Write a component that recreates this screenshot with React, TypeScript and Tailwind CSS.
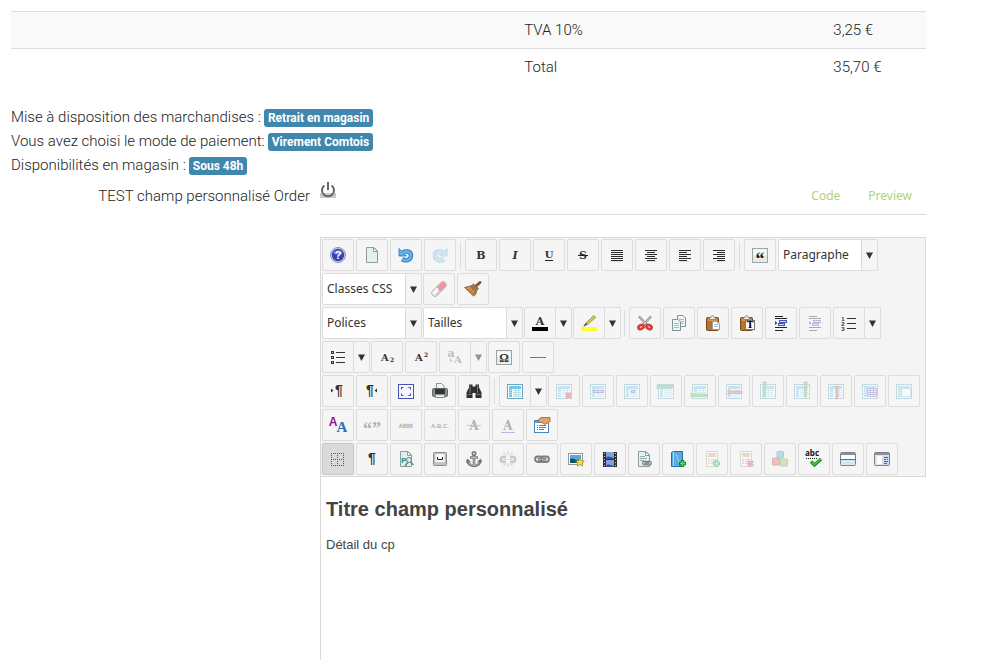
import React, { useState } from 'react';

type IconProps = { children: React.ReactNode; faded?: boolean };

const Icon: React.FC<IconProps> = ({ children, faded }) => (
  <svg width="16" height="16" viewBox="0 0 16 16" fill="none" aria-hidden="true" className={faded ? 'overflow-visible opacity-35' : 'overflow-visible'}>
    {children}
  </svg>
);

const SERIF = '"DejaVu Serif", "Liberation Serif", serif';
const SANS = '"Liberation Sans", sans-serif';

// Letter based icons (bold, italic, superscript...)
type GlyphProps = { text: string; x?: number; y?: number; size?: number; color?: string; italic?: boolean; weight?: number; font?: string };

const Glyph: React.FC<GlyphProps> = ({ text, x = 8, y = 13, size = 11, color = '#333', italic, weight = 700, font = SERIF }) => (
  <text x={x} y={y} fontSize={size} fill={color} textAnchor="middle" fontWeight={weight} fontStyle={italic ? 'italic' : 'normal'} fontFamily={font}>
    {text}
  </text>
);

const Lines: React.FC<{ rows: number[][] }> = ({ rows }) => (
  <>
    {rows.map(([x, w], i) => <rect key={i} x={x} y={3 + i * 2} width={w} height="1" fill="#2b2b2b" />)}
    <rect x="3" y="14" width="10" height="1" fill="#ddd" />
  </>
);

// Base table used by every table action
const Grid: React.FC<{ inner?: string }> = ({ inner = '#b5d9e6' }) => (
  <>
    <rect x="0.5" y="1.5" width="15" height="14" fill="#fff" stroke="#6fa3b8" />
    <rect x="2" y="3" width="12" height="3" fill="#6cc8ea" />
    <rect x="2" y="6" width="3" height="8" fill="#6cc8ea" />
    <path d="M6 7.500h8M6 9.500h8M6 11.500h8M6 13.500h8M8.500 6v8M11.500 6v8" stroke={inner} />
    <path d="M2 7.500h3M2 9.500h3M2 11.500h3" stroke="#a8dcf0" />
  </>
);

const Cross: React.FC = () => <path d="M10 10l5 5M15 10l-5 5" stroke="#d43a3a" strokeWidth="2.800" />;
const Plus: React.FC = () => (
  <>
    <path d="M9 12.500h7M12.500 9v7" stroke="#12852c" strokeWidth="3.400" />
    <path d="M10 12.500h5M12.500 10v5" stroke="#4be06a" strokeWidth="1.600" />
  </>
);

const Page: React.FC = () => (
  <>
    <path d="M2.500 .5h7.500l3.500 3.500v11.500h-11z" fill="#e3f0ef" stroke="#8b9c9c" />
    <path d="M9.500 .5v4h4z" fill="#fff" stroke="#8b9c9c" />
  </>
);

const Chain: React.FC = () => (
  <>
    <rect x="1" y="5.500" width="8" height="5.500" rx="2.700" stroke="#7d7d7d" strokeWidth="1.800" fill="#ddd" />
    <rect x="7" y="5.500" width="8" height="5.500" rx="2.700" stroke="#7d7d7d" strokeWidth="1.800" fill="#ddd" />
    <path d="M4 8.300h8" stroke="#555" strokeWidth="2.200" />
    <path d="M4.500 8.200h7" stroke="#ddd" strokeWidth=".9" />
  </>
);

const Clipboard: React.FC = () => (
  <>
    <rect x="1.500" y="2.500" width="12" height="13" rx="1" fill="#b5732f" stroke="#7c481b" />
    <path d="M3 4h9v2h-9z" fill="#d39a5b" />
    <path d="M4.500 4.500v-2h1.500c0-2.500 3-2.500 3 0h1.500v2z" fill="#eee" stroke="#888" />
  </>
);

const Indent: React.FC = () => (
  <>
    <path d="M2 1.500h8M2 3.500h12M2 12.500h12M2 15.500h8" stroke="#222" />
    <rect x="6.500" y="5.500" width="7" height="2" fill="#cdd6fa" stroke="#4555b8" />
    <rect x="5.500" y="8.500" width="6" height="2" fill="#cdd6fa" stroke="#4555b8" />
    <path d="M2 6v4l2.500-2z" fill="#2b3ea8" />
  </>
);

const Article: React.FC = () => (
  <>
    <path d="M2.500 .5h11v15h-11z" fill="#fff" stroke="#aaa08e" />
    <rect x="4" y="2" width="8" height="4" fill="#d9a066" />
    <path d="M4 8.500h2M7 8.500h5M4 10.500h2M7 10.500h5M4 12.500h2M7 12.500h4" stroke="#999" />
  </>
);

const UndoArrow: React.FC<{ dark: string; light: string }> = ({ dark, light }) => (
  <>
    <path d="M4 6.500c2.500-3.500 9-2.500 9 2c0 4.500-5 6-9 3.800" stroke={dark} strokeWidth="4.400" />
    <path d="M1 1.500v7.500h7.500z" fill={light} stroke={dark} strokeWidth=".8" />
    <path d="M4 6.500c2.500-3.500 9-2.500 9 2c0 4.500-5 6-9 3.800" stroke={light} strokeWidth="2.900" />
  </>
);

const icons: Record<string, React.ReactNode> = {
  help: (
    <Icon>
      <circle cx="8" cy="8" r="7.500" fill="#d4d7ea" stroke="#8b90ba" />
      <circle cx="8" cy="8" r="6.200" fill="#3540b4" />
      <path d="M3 6.500c1-4.500 9-4.500 10 0c-3 1.500-7 1.500-10 0z" fill="#6f7ce0" />
      <Glyph text="?" y={12} size={11} color="#fff" font={SANS} />
    </Icon>
  ),
  newDoc: <Icon><Page /></Icon>,
  undo: <Icon><UndoArrow dark="#2874b8" light="#62b0ea" /></Icon>,
  redo: <Icon faded><g transform="matrix(-1 0 0 1 16 0)"><UndoArrow dark="#4d9bd0" light="#8ccaee" /></g></Icon>,
  bold: <Icon><Glyph text="B" y={12} /></Icon>,
  italic: <Icon><Glyph text="I" y={12} italic /></Icon>,
  underline: <Icon><Glyph text="U" y={11} size={10} /><path d="M4 13.500h8" stroke="#222" /></Icon>,
  strike: <Icon><Glyph text="S" y={12} /><path d="M3 8.500h10" stroke="#222" /></Icon>,
  justify: <Icon><Lines rows={[[2, 12], [2, 12], [2, 12], [2, 12], [2, 12], [2, 12]]} /></Icon>,
  center: <Icon><Lines rows={[[2, 12], [4, 8], [2, 12], [4, 8], [2, 12], [4, 8]]} /></Icon>,
  left: <Icon><Lines rows={[[2, 12], [2, 8], [2, 12], [2, 8], [2, 12], [2, 8]]} /></Icon>,
  right: <Icon><Lines rows={[[2, 12], [6, 8], [2, 12], [6, 8], [2, 12], [6, 8]]} /></Icon>,
  quote: (
    <Icon>
      <rect x=".5" y="1.500" width="15" height="14" fill="#e6eaea" stroke="#a0a6a6" />
      <rect x="1.500" y="2.500" width="13" height="6" fill="#f8fafa" />
      <Glyph text="“" y={18} size={18} font='"Liberation Serif", serif' color="#222" />
    </Icon>
  ),
  eraser: (
    <Icon>
      <path d="M4 12l8-8" stroke="#a39e9e" strokeWidth="7" strokeLinecap="round" />
      <path d="M4 12l8-8" stroke="#f0efee" strokeWidth="5.600" strokeLinecap="round" />
      <path d="M9 7l3-3" stroke="#ee94a0" strokeWidth="5.600" strokeLinecap="round" />
      <path d="M3 11.500l3.500-3.500" stroke="#fff" strokeWidth="2" strokeLinecap="round" />
      <path d="M5 14l4-4" stroke="#cfcaca" strokeWidth="1.400" />
    </Icon>
  ),
  brush: (
    <Icon>
      <path d="M15 1.500l-4.500 4" stroke="#8d5527" strokeWidth="3" strokeLinecap="round" />
      <path d="M8.500 3l5 4.500-3 3.500-6-5z" fill="#8a7a66" stroke="#5f5446" strokeWidth=".7" />
      <path d="M-.5 6.500l6-1.500 6 5.500c0 2-1 3.500-3 4.500z" fill="#ba7c38" stroke="#8b571f" strokeWidth=".7" />
      <path d="M2 7.500l4-1M4 9.500l3-1.500M6.500 12l2.500-2.500" stroke="#e8b978" strokeWidth=".8" />
    </Icon>
  ),
  color: <Icon><Glyph text="A" y={10} size={11} /><rect x="0" y="12" width="16" height="4" fill="#000" /></Icon>,
  highlight: (
    <Icon>
      <path d="M13 .5l-8 7.500-2 3 3.500-1.500 8-7z" fill="#d8d24a" stroke="#77732d" strokeWidth=".7" />
      <path d="M5 8l-3 3.500 4.500-2z" fill="#555" />
      <rect x="0" y="12" width="16" height="4" fill="#fdfd38" />
    </Icon>
  ),
  cut: (
    <Icon>
      <path d="M2 1.500l9 9.500M14 1.500l-9 9.500" stroke="#858585" strokeWidth="2.300" />
      <path d="M2.500 2l8 8.500M13.500 2l-8 8.500" stroke="#e5e5e5" strokeWidth=".9" />
      <ellipse cx="4" cy="12" rx="2.800" ry="1.800" transform="rotate(-30 4 12)" stroke="#d63c3c" strokeWidth="2.600" />
      <ellipse cx="12" cy="12" rx="2.800" ry="1.800" transform="rotate(30 12 12)" stroke="#d63c3c" strokeWidth="2.600" />
    </Icon>
  ),
  copy: (
    <Icon>
      <path d="M6.500 .5h5.500l2.500 2.500v8.500h-8z" fill="#edf6f6" stroke="#7d9599" />
      <path d="M8 4.500h5M8 6.500h5M8 8.500h5" stroke="#a6bec1" />
      <path d="M1.500 4.500h5.500l2.500 2.500v8.500h-8z" fill="#edf6f6" stroke="#7d9599" />
      <path d="M3 8.500h5M3 10.500h5M3 12.500h5" stroke="#a6bec1" />
    </Icon>
  ),
  paste: (
    <Icon>
      <Clipboard />
      <path d="M7.500 6.500h4.500l2.500 2.500v5.500h-7z" fill="#fff" stroke="#8da0a3" />
      <path d="M9 9.500h4M9 11.500h4" stroke="#a6bec1" />
    </Icon>
  ),
  pasteText: (
    <Icon>
      <Clipboard />
      <rect x="6.500" y="5.500" width="9" height="9" fill="#fff" stroke="#777" />
      <Glyph text="T" x={11} y={13} size={9} color="#000" />
    </Icon>
  ),
  indent: <Icon><Indent /></Icon>,
  outdent: <Icon faded><Indent /></Icon>,
  ordered: (
    <Icon>
      <path d="M6 3.500h9M6 8.500h9M6 13.500h9" stroke="#333" />
      <Glyph text="1" x={2} y={6} size={6} font={SANS} />
      <Glyph text="2" x={2} y={11} size={6} font={SANS} />
      <Glyph text="3" x={2} y={16} size={6} font={SANS} />
    </Icon>
  ),
  bullets: (
    <Icon>
      <path d="M6 3.500h9M6 8.500h9M6 13.500h9" stroke="#333" />
      <path d="M1 2h3v3H1zM1 7h3v3H1zM1 12h3v3H1z" fill="#333" />
      <path d="M2 3h1v1H2zM2 8h1v1H2zM2 13h1v1H2z" fill="#ccc" />
    </Icon>
  ),
  sub: <Icon><Glyph text="A" x={6} y={12} size={10} /><Glyph text="2" x={13} y={13} size={6} /></Icon>,
  sup: <Icon><Glyph text="A" x={6} y={12} size={10} /><Glyph text="2" x={13} y={8} size={6} /></Icon>,
  changeCase: (
    <Icon faded>
      <Glyph text="a" x={4} y={8} size={11} color="#555" />
      <Glyph text="A" x={11} y={14} size={10} color="#555" />
      <path d="M3.500 9v3h2" stroke="#555bb0" />
    </Icon>
  ),
  omega: (
    <Icon>
      <rect x=".5" y="1.500" width="15" height="14" fill="#e9ecec" stroke="#9da3a3" />
      <rect x="1.500" y="2.500" width="13" height="6" fill="#fafbfb" />
      <Glyph text="Ω" y={13} size={12} font='"Liberation Serif", serif' />
    </Icon>
  ),
  rule: <Icon><path d="M0 8.500h16" stroke="#777" /></Icon>,
  ltr: <Icon><Glyph text="¶" x={9} y={12} size={14} font={SANS} /><path d="M1 5.500v4l2.500-2z" fill="#333" /></Icon>,
  rtl: <Icon><Glyph text="¶" x={6} y={12} size={14} font={SANS} /><path d="M13 5.500v4l-2.500-2z" fill="#333" /></Icon>,
  fullscreen: (
    <Icon>
      <rect x=".5" y="1.500" width="15" height="14" fill="#f5f8ff" stroke="#4652b4" />
      <path d="M3.500 6.500v-2h2M10.500 4.500h2v2M12.500 10.500v2h-2M5.500 12.500h-2v-2" stroke="#3545b5" />
    </Icon>
  ),
  print: (
    <Icon>
      <path d="M4.500 6v-5.500h5l2.500 2.500v3" fill="#eef6f6" stroke="#86979b" />
      <rect x=".5" y="5.500" width="15" height="8" rx="1.500" fill="#8d8d8d" stroke="#666" />
      <rect x="3" y="6" width="10" height="5" fill="#333" />
      <path d="M3.500 11.500h9v3h-9z" fill="#dcecdf" stroke="#888" />
    </Icon>
  ),
  find: (
    <Icon>
      <path d="M3 1.500h3.500v2h3v-2h3.500v3l2.500 5v5.500h-6v-5h-3v5h-6v-5.500l2.500-5z" fill="#303030" />
      <path d="M4 2v8M11.500 2v8M1.500 11.500h4M10.500 11.500h4" stroke="#777" />
    </Icon>
  ),
  table: <Icon><Grid /></Icon>,
  tableDelete: <Icon faded><Grid /><Cross /></Icon>,
  rowProps: <Icon faded><Grid /><rect x="3.500" y="7.500" width="10" height="2" fill="#c0c0fa" stroke="#5555c0" /></Icon>,
  cellProps: <Icon faded><Grid /><rect x="7.500" y="7.500" width="3" height="2" fill="#c0c0fa" stroke="#5555c0" /></Icon>,
  rowBefore: <Icon faded><Grid /><path d="M-1 1.500l2 1h14v2.500h-14l-2 1z" fill="#67c867" stroke="#3c9c48" strokeWidth=".7" /></Icon>,
  rowAfter: <Icon faded><Grid /><path d="M-1 10l2 1h14v2.500h-14l-2 1z" fill="#67c867" stroke="#3c9c48" strokeWidth=".7" /></Icon>,
  rowDelete: <Icon faded><Grid /><path d="M2 7l2 1h12v2.500h-12l-2 1z" fill="#db6b6b" stroke="#b24545" strokeWidth=".7" /></Icon>,
  colBefore: <Icon faded><Grid /><path d="M2.500 -1h4l-1 2v13h-2v-13z" fill="#67c867" stroke="#3c9c48" strokeWidth=".7" /></Icon>,
  colAfter: <Icon faded><Grid /><path d="M9.500 -1h4l-1 2v13h-2v-13z" fill="#67c867" stroke="#3c9c48" strokeWidth=".7" /></Icon>,
  colDelete: <Icon faded><Grid /><path d="M7 3h4l-1 2v11h-2v-11z" fill="#db6b6b" stroke="#b24545" strokeWidth=".7" /></Icon>,
  split: <Icon faded><Grid inner="#6666c4" /><path d="M5.500 5.500h9v8h-9z" stroke="#6666c4" /></Icon>,
  merge: <Icon faded><Grid /><rect x="5.500" y="5.500" width="9" height="8" fill="#fff" stroke="#8ac7df" /></Icon>,
  style: <Icon><Glyph text="A" x={3} y={9} size={12} color="#8b1890" font={SANS} /><Glyph text="A" x={12} y={15} size={15} color="#3170b6" font='"Liberation Serif", serif' /></Icon>,
  cite: <Icon faded><Glyph text="“”" y={18} size={18} font='"Liberation Serif", serif' /></Icon>,
  abbr: <Icon faded><Glyph text="ABBR" y={11} size={6} font='"DejaVu Sans Mono", monospace' /></Icon>,
  acronym: <Icon faded><Glyph text="A.B.C." y={11} size={6} font={SANS} /></Icon>,
  del: <Icon faded><Glyph text="A" y={13} size={12} /><path d="M1 8.500h14" stroke="#ff3b20" /></Icon>,
  ins: <Icon faded><Glyph text="A" y={13} size={12} /><path d="M1 15.500h14" stroke="#4a4acb" /></Icon>,
  attribs: (
    <Icon>
      <rect x=".5" y="3.500" width="14" height="12" fill="#fff" stroke="#4b87bd" />
      <path d="M1 4h13v2H1z" fill="#5aa0da" />
      <path d="M3 8.500h1M5 8.500h7M3 10.500h1M5 10.500h7M3 12.500h1M5 12.500h5" stroke="#777" />
      <path d="M4 3l3-2.500h9v4l-5 3-3-2h-3z" fill="#dca465" stroke="#98662c" strokeWidth=".8" />
    </Icon>
  ),
  visualAid: (
    <Icon>
      <path d="M1.500 2v13M7.500 2v13M13.500 2v13M1 2.500h13M1 8.500h13M1 14.500h13" stroke="#555" strokeDasharray="1 1" />
    </Icon>
  ),
  chars: <Icon><Glyph text="¶" x={8} y={12} size={14} font={SANS} /></Icon>,
  pageLink: (
    <Icon>
      <Page />
      <Glyph text="P" x={6} y={12} size={8} color="#248c86" font={SANS} />
      <circle cx="11" cy="9" r="2.500" fill="#dcebf4" stroke="#71838c" />
      <path d="M10 11l-3 4M12.500 11l3 3" stroke="#71838c" strokeWidth="1.500" />
    </Icon>
  ),
  nbsp: (
    <Icon>
      <rect x="1.500" y="1.500" width="13" height="13" rx="1" fill="#c4c4c4" stroke="#8a8a8a" />
      <rect x="3.500" y="3" width="9" height="8" fill="#f7f7f7" />
      <path d="M5.500 6v2.500h5v-2.500" stroke="#222" />
    </Icon>
  ),
  anchor: (
    <Icon>
      <circle cx="8" cy="2.500" r="1.700" stroke="#777" strokeWidth="1.600" />
      <path d="M8 4v11M4 6.500h8M1.500 9.500c.5 3 3 5 6.500 5.500c3.500-.5 6-2.500 6.500-5.500" stroke="#777" strokeWidth="2.600" />
      <path d="M0 11.500l1-4 4 3zM16 11.500l-1-4-4 3z" fill="#777" />
      <path d="M8 5v9M5 6.500h6M3 12c1.500 1.500 3 2 5 2.500c2-.5 3.500-1 5-2.500" stroke="#ccc" strokeWidth=".8" />
    </Icon>
  ),
  unlink: (
    <Icon faded>
      <path d="M6 6h-3c-3 0-3 5 0 5h3M10 6h3c3 0 3 5 0 5h-3" stroke="#777" strokeWidth="2.400" />
      <path d="M3 8.500h4M9 8.500h4M8 0v4M8 12.500v3.500M3 1l3 3.500M13 1l-3 3.500M3 15.500l3-3M13 15.500l-3-3" stroke="#888" />
    </Icon>
  ),
  link: <Icon><Chain /></Icon>,
  image: (
    <Icon>
      <rect x=".5" y="2.500" width="14" height="11" fill="#fff" stroke="#8a9ba3" />
      <rect x="2" y="4" width="11" height="8" fill="#5ba6dc" />
      <path d="M2 8c4-2 6 3 11 0v4h-11z" fill="#164e68" />
      <path d="M12 7l1.300 2.700 3 .4-2.200 2 .6 3-2.700-1.500-2.700 1.500.6-3-2.200-2 3-.4z" fill="#f5e04b" stroke="#a38b12" strokeWidth=".7" />
    </Icon>
  ),
  media: (
    <Icon>
      <rect x="1" y="1" width="14" height="15" fill="#303030" />
      <path d="M4 1h8v7h-8z" fill="#7fa1e0" />
      <path d="M4 9h8v7h-8z" fill="#7fa1e0" />
      <path d="M4 7c2-3 4-1 8 0v1h-8zM4 15c2-3 4-1 8 0v1h-8z" fill="#3b5090" />
      <path d="M2.500 2v14M13.500 2v14" stroke="#ccc" strokeDasharray="1 2" />
    </Icon>
  ),
  docLink: (
    <Icon>
      <Page />
      <path d="M4 5.500h5M4 7.500h7M4 9.500h4" stroke="#97aeb0" />
      <g transform="translate(6 7) scale(.62)"><Chain /></g>
    </Icon>
  ),
  bookAdd: (
    <Icon>
      <path d="M1.500 1.500l2-1h9v15h-11z" fill="#5aabe4" stroke="#286da5" />
      <path d="M3.500 1v14M6 3l4 10" stroke="#a9daf6" />
      <Plus />
    </Icon>
  ),
  articleAdd: <Icon faded><Article /><Plus /></Icon>,
  articleDelete: <Icon faded><Article /><Cross /></Icon>,
  blocks: (
    <Icon faded>
      <rect x="5" y=".5" width="6.500" height="6.500" rx="1" fill="#4ba4d5" stroke="#297aa8" />
      <rect x=".5" y="7" width="7" height="7" rx="1" fill="#e25d63" stroke="#b73740" />
      <rect x="8" y="8" width="7.500" height="7" rx="1" fill="#85c950" stroke="#568f2e" />
    </Icon>
  ),
  spell: (
    <Icon>
      <Glyph text="abc" x={6} y={5} size={8} color="#111" font='"Open Sans", sans-serif' />
      <path d="M0 7.500h12" stroke="#222" strokeDasharray="1 1" />
      <path d="M5 10.500l3.500 3.500 6.500-6" stroke="#1c8e2b" strokeWidth="3.400" />
      <path d="M5.500 11l3 2.500 6-5.500" stroke="#45c850" strokeWidth="1.500" />
    </Icon>
  ),
  pageBreak: (
    <Icon>
      <rect x=".5" y="1.500" width="15" height="13" rx="1" fill="#fff" stroke="#7b8388" />
      <path d="M1 2h14v2H1z" fill="#8b9196" />
      <path d="M1 9h14v5H1z" fill="#d3eaf5" />
      <path d="M0 8.500h16" stroke="#5a6d78" />
    </Icon>
  ),
  readMore: (
    <Icon>
      <rect x=".5" y="1.500" width="15" height="13" rx="1" fill="#e0e4e6" stroke="#7b8388" />
      <path d="M1 2h14v2H1z" fill="#8b9196" />
      <path d="M3 5h5v8H3z" fill="#fff" />
      <path d="M9 5h6v9H9z" fill="#cbd9f3" />
      <path d="M10 6.500h4M10 8.500h2M13 8.500h1M10 10.500h4M10 12.500h3" stroke="#4267b8" />
    </Icon>
  ),
};

const Caret: React.FC<{ faded?: boolean }> = ({ faded }) => (
  <svg width="7" height="7" viewBox="0 0 7 7" aria-hidden="true" className={faded ? 'opacity-50' : ''}>
    <path d="M0 .5h7L3.500 7z" fill="#333" />
  </svg>
);

const Tool: React.FC<{ name: string }> = ({ name }) => {
  const [active, setActive] = useState(name === 'visualAid');
  return (
    <button
      type="button"
      aria-label={name}
      aria-pressed={active}
      onClick={() => name === 'visualAid' && setActive(!active)}
      className={`flex size-8 shrink-0 items-center justify-center rounded-xs border ${active ? 'border-[#c8c8c8] bg-[#dadada]' : 'border-[#dcdcdc] bg-[#f5f5f5]'}`}
    >
      {icons[name]}
    </button>
  );
};

const SplitTool: React.FC<{ name: string; faded?: boolean }> = ({ name, faded }) => (
  <div className="-mr-px flex h-8 shrink-0">
    <button type="button" aria-label={name} className="flex w-8 items-center justify-center rounded-l-xs border border-[#dcdcdc] bg-[#f5f5f5]">
      {icons[name]}
    </button>
    <button type="button" aria-label={`${name} options`} className="flex w-4 items-center justify-center rounded-r-xs border border-l-0 border-[#dcdcdc] bg-[#f5f5f5]">
      <Caret faded={faded} />
    </button>
  </div>
);

const ListBox: React.FC<{ label: string }> = ({ label }) => (
  <div className="relative -mr-px h-8 w-[100px] shrink-0">
    <select aria-label={label} className="size-full appearance-none rounded-xs border border-[#dcdcdc] bg-white pr-4 pl-1 font-['Noto_Sans','Open_Sans',sans-serif] text-[12px] font-normal text-[#333] outline-none">
      <option>{label}</option>
    </select>
    <span className="pointer-events-none absolute inset-y-0 right-0 flex w-[17px] items-center justify-center rounded-r-xs border border-[#dcdcdc] bg-[#f5f5f5]">
      <Caret />
    </span>
  </div>
);

const Separator: React.FC = () => <span className="mx-0.5 h-[26px] w-px shrink-0 self-center bg-[#dcdcdc]" />;

// "|" is a separator, "name+" a split button, "=Label" a list box
const toolbars = [
  ['help', 'newDoc', 'undo', 'redo', '|', 'bold', 'italic', 'underline', 'strike', 'justify', 'center', 'left', 'right', '|', 'quote', '=Paragraphe', '=Classes CSS', 'eraser', 'brush'],
  ['=Polices', '=Tailles', 'color+', 'highlight+', '|', 'cut', 'copy', 'paste', 'pasteText', 'indent', 'outdent', 'ordered+', 'bullets+', 'sub', 'sup', 'changeCase+', 'omega', 'rule'],
  ['ltr', 'rtl', 'fullscreen', 'print', 'find', '|', 'table+', 'tableDelete', 'rowProps', 'cellProps', 'rowBefore', 'rowAfter', 'rowDelete', 'colBefore', 'colAfter', 'colDelete', 'split', 'merge', 'style', 'cite', 'abbr', 'acronym', 'del', 'ins', 'attribs'],
  ['visualAid', 'chars', 'pageLink', 'nbsp', 'anchor', 'unlink', 'link', 'image', 'media', 'docLink', 'bookAdd', 'articleAdd', 'articleDelete', 'blocks', 'spell', 'pageBreak', 'readMore'],
];

const renderItem = (item: string, key: number) => {
  if (item === '|') return <Separator key={key} />;
  if (item.startsWith('=')) return <ListBox key={key} label={item.slice(1)} />;
  if (item.endsWith('+')) return <SplitTool key={key} name={item.slice(0, -1)} faded={item === 'changeCase+'} />;
  return <Tool key={key} name={item} />;
};

const totals = [
  { label: 'TVA 10%', amount: '3,25 €' },
  { label: 'Total', amount: '35,70 €' },
];

const infos = [
  { label: 'Mise à disposition des marchandises :', value: 'Retrait en magasin' },
  { label: 'Vous avez choisi le mode de paiement:', value: 'Virement Comtois' },
  { label: 'Disponibilités en magasin :', value: 'Sous 48h' },
];

const Editor: React.FC = () => (
  <div className="min-w-0 flex-1 font-normal">
    <div className="flex h-[33px] items-start justify-between border-b border-[#ddd]">
      <button type="button" aria-label="Toggle editor" className="bg-linear-to-b from-transparent from-70% to-[#c8c8c8] to-70%">
        <svg width="16" height="16" viewBox="0 0 16 16" fill="none" aria-hidden="true">
          <path d="M4.500 3.500a6 6 0 1 0 7 0" stroke="#666" strokeWidth="2" />
          <path d="M8 0v8" stroke="#666" strokeWidth="2" />
        </svg>
      </button>
      <nav className="flex gap-7 pt-1 pr-[14px] font-['Noto_Sans','Open_Sans',sans-serif] text-[12px] leading-5 text-[#b5d272]">
        <a href="#code">Code</a>
        <a href="#preview">Preview</a>
      </nav>
    </div>
    <div role="toolbar" aria-label="Editor" className="mt-[22px] flex flex-col gap-0.5 border border-[#d9d9d9] bg-[#f4f4f4] p-px">
      {toolbars.map((items, i) => (
        <div key={i} className="flex flex-wrap gap-0.5">
          {items.map(renderItem)}
        </div>
      ))}
    </div>
    <div className="min-h-[200px] border-l border-[#d9d9d9] px-[5px] pt-5 font-['Liberation_Sans',sans-serif] text-[#444]">
      <h2 className="text-xl leading-6 font-bold">Titre champ personnalisé</h2>
      <p className="mt-[14px] text-[13px] leading-5">Détail du cp</p>
    </div>
  </div>
);

const App: React.FC = () => (
  <div className="h-screen overflow-hidden bg-white pt-[11px] pr-[71px] pl-[11px] font-['Roboto',sans-serif] text-[15px] leading-5 font-light text-[#222]">
    <table className="w-full table-fixed">
      <tbody>
        {totals.map((row, i) => (
          <tr key={row.label} className={i === 0 ? 'bg-[#f9f9f9]' : ''}>
            <td className="w-[55%] border-t border-[#ddd] p-2"></td>
            <td className="w-[34%] border-t border-[#ddd] py-2 pl-[10px]">{row.label}</td>
            <td className="border-t border-[#ddd] p-2">{row.amount}</td>
          </tr>
        ))}
      </tbody>
    </table>

    <div className="mt-5">
      {infos.map((info) => (
        <p key={info.label} className="flex items-baseline gap-[3px] leading-6">
          {info.label}
          <span className="rounded-[3px] bg-[#3f87ad] px-1 py-0.5 text-[12px] leading-[14px] font-bold text-white">{info.value}</span>
        </p>
      ))}
    </div>

    <div className="mt-[5px] flex gap-[10px]">
      <div className="w-[299px] shrink-0 pt-1 text-right">TEST champ personnalisé Order</div>
      <Editor />
    </div>
  </div>
);

export default App;
